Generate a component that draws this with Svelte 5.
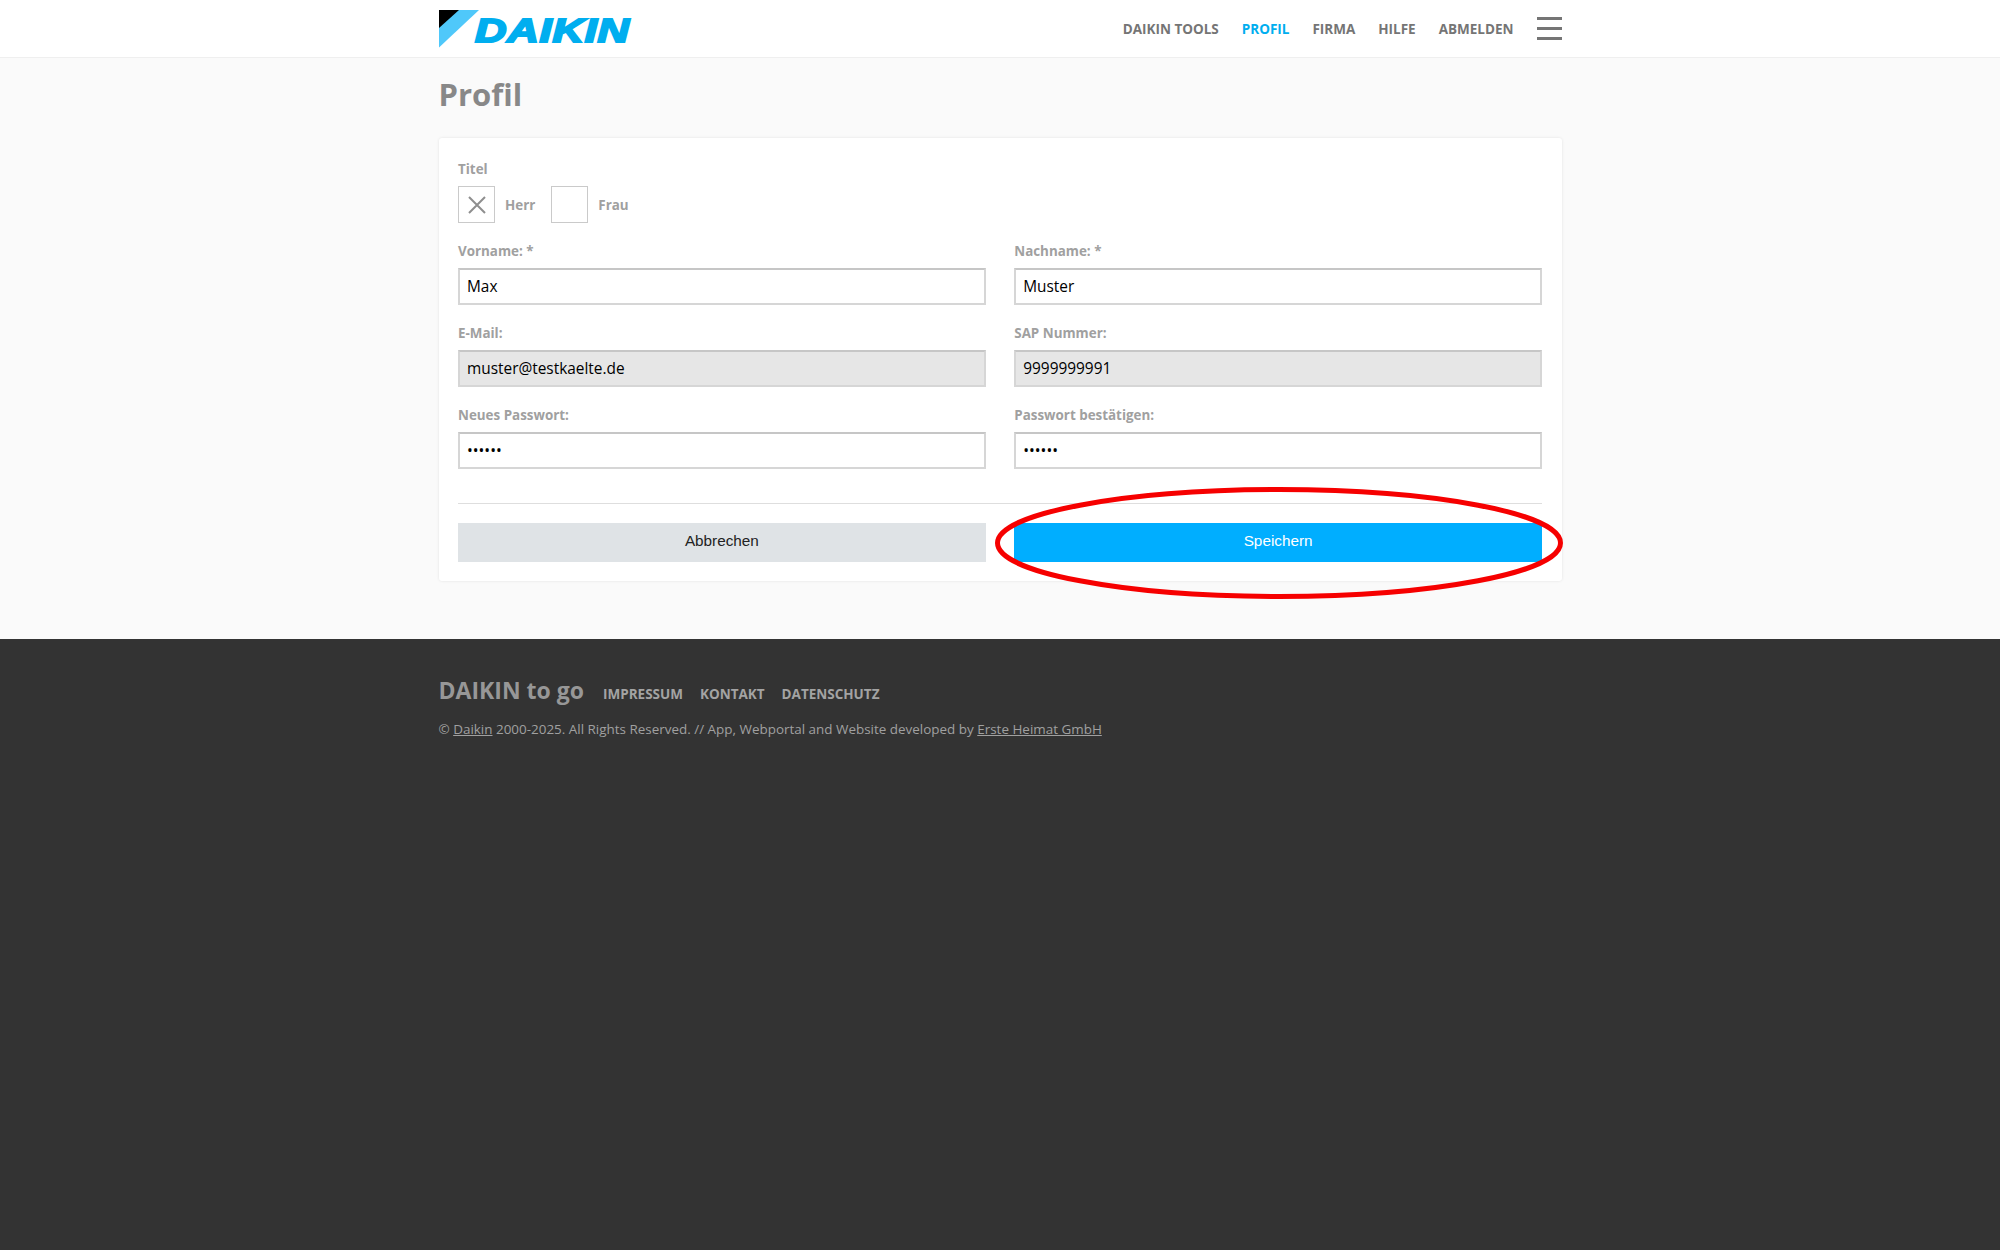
<script>
  const nav = ['DAIKIN TOOLS', 'PROFIL', 'FIRMA', 'HILFE', 'ABMELDEN'];
  const fields = [
    { label: 'Vorname: *', value: 'Max', type: 'text' },
    { label: 'Nachname: *', value: 'Muster', type: 'text' },
    { label: 'E-Mail:', value: 'muster@testkaelte.de', type: 'text', off: true },
    { label: 'SAP Nummer:', value: '9999999991', type: 'text', off: true },
    { label: 'Neues Passwort:', value: 'secret', type: 'password' },
    { label: 'Passwort bestätigen:', value: 'secret', type: 'password' }
  ];
</script>

<div class="page">
  <header class="top">
    <div class="wrap topin">
      <div class="logo">
        <svg width="41" height="38" viewBox="0 0 41 38" aria-hidden="true">
          <polygon points="0,0 40,0 0,37.5" fill="#4fc8fa" />
          <polygon points="0,0 20,0 0,18" fill="#000" />
        </svg>
        <span class="logotext">DAIKIN</span>
      </div>
      <nav class="nav">
        {#each nav as n}
          <a class:active={n === 'PROFIL'} href="#top">{n}</a>
        {/each}
        <span class="burger"><i></i><i></i><i></i></span>
      </nav>
    </div>
  </header>

  <main class="main">
    <div class="wrap">
      <h1>Profil</h1>
      <section class="card">
        <div class="label titel">Titel</div>
        <div class="choices">
          <span class="box">
            <svg width="18" height="18" viewBox="0 0 18 18" aria-hidden="true">
              <path d="M1 1 L17 17 M17 1 L1 17" stroke="#8e8e8e" stroke-width="2" fill="none" />
            </svg>
          </span>
          <span class="label opt">Herr</span>
          <span class="box"></span>
          <span class="label opt">Frau</span>
        </div>
        <div class="grid">
          {#each fields as f}
            <div class="field">
              <div class="label">{f.label}</div>
              <input class:off={f.off} type={f.type} value={f.value} readonly />
            </div>
          {/each}
        </div>
        <hr />
        <div class="actions">
          <button class="cancel">Abbrechen</button>
          <button class="save">Speichern</button>
        </div>
        <svg class="ring" width="568" height="112" viewBox="0 0 568 112" aria-hidden="true">
          <ellipse cx="284" cy="56" rx="281.5" ry="53.5" fill="none" stroke="#f60000" stroke-width="5" />
        </svg>
      </section>
    </div>
  </main>

  <footer class="foot">
    <div class="wrap">
      <div class="footrow">
        <span class="brand">DAIKIN to go</span>
        <a href="#top">IMPRESSUM</a>
        <a href="#top">KONTAKT</a>
        <a href="#top">DATENSCHUTZ</a>
      </div>
      <p class="copy">© <a href="#top">Daikin</a> 2000-2025. All Rights Reserved. // App, Webportal and Website developed by <a href="#top">Erste Heimat GmbH</a></p>
    </div>
  </footer>
</div>

<style>
  :global(body) { margin: 0; }
  .page {
    min-height: 100vh;
    display: flex;
    flex-direction: column;
    font-family: "Open Sans", "Liberation Sans", sans-serif;
    background: #fafafa;
  }
  .wrap { width: 1123px; margin: 0 auto; }
  .top { background: #fff; height: 57px; border-bottom: 1px solid #efefef; }
  .topin { display: flex; align-items: center; justify-content: space-between; height: 57px; }
  .logo { display: flex; align-items: center; margin-top: 1px; }
  .logo svg { display: block; }
  .logotext {
    font-family: "Liberation Sans", sans-serif;
    font-weight: 700;
    font-style: italic;
    font-size: 33px;
    line-height: 38px;
    color: #00aeef;
    -webkit-text-stroke: 2px #00aeef;
    letter-spacing: 0.6px;
    margin-left: -5px;
    margin-top: 4px;
    transform: scaleX(1.32);
    transform-origin: left center;
  }
  .nav { display: flex; align-items: center; gap: 23px; }
  .nav a { font-size: 13.5px; font-weight: 700; color: #757575; text-decoration: none; }
  .nav a.active { color: #00aeef; }
  .burger { display: flex; flex-direction: column; gap: 7px; width: 25px; }
  .burger i { display: block; height: 3px; background: #757575; }
  .main { height: 581px; }
  h1 { margin: 0; font-size: 31px; line-height: 40px; font-weight: 700; color: #888; padding: 16px 0 24px; }
  .card {
    position: relative;
    box-sizing: border-box;
    height: 443px;
    background: #fff;
    border-radius: 3px;
    box-shadow: 0 0 3px rgba(0, 0, 0, 0.1);
    padding: 22px 19.5px 0;
  }
  .label { font-size: 13.4px; line-height: 18px; font-weight: 700; color: #a0a0a0; }
  .titel { margin-bottom: 8px; }
  .choices { display: flex; align-items: center; height: 37px; }
  .box {
    box-sizing: border-box;
    width: 37px;
    height: 37px;
    border: 1px solid #cacaca;
    display: flex;
    align-items: center;
    justify-content: center;
  }
  .opt { margin: 0 16px 0 10px; }
  .grid { display: grid; grid-template-columns: 1fr 1fr; column-gap: 28.5px; row-gap: 19px; margin-top: 18.5px; }
  .field .label { margin-bottom: 8px; }
  input {
    display: block;
    box-sizing: border-box;
    width: 100%;
    height: 37px;
    padding: 0 7px;
    border: 2px solid #d6d6d6;
    border-top-color: #c6c6c6;
    border-radius: 0;
    outline: none;
    font: 400 15.4px "Open Sans", sans-serif;
    color: #000;
    background: #fff;
  }
  input.off { background: #e6e6e6; }
  hr { border: 0; border-top: 1px solid #dedede; margin: 34.5px 0 19px; }
  .actions { display: grid; grid-template-columns: 1fr 1fr; column-gap: 28.5px; }
  button {
    height: 39px;
    border: 0;
    padding: 0 0 3px;
    font: 400 15.3px "Liberation Sans", Arial, sans-serif;
  }
  .cancel { background: #dfe3e6; color: #222; }
  .save { background: #00aeff; color: #fff; }
  .ring { position: absolute; left: 556.5px; top: 349px; pointer-events: none; }
  .foot { flex: 1; background: #333; color: #a3a3a3; padding-top: 35px; }
  .footrow { display: flex; align-items: baseline; gap: 17px; }
  .brand { font-size: 23px; line-height: 32px; font-weight: 700; color: #979797; margin-right: 2px; }
  .footrow a { font-size: 13.5px; font-weight: 700; color: #a3a3a3; text-decoration: none; }
  .copy { margin: 13px 0 0; font-size: 13.45px; line-height: 20px; color: #a0a0a0; }
  .copy a { color: inherit; }
</style>
